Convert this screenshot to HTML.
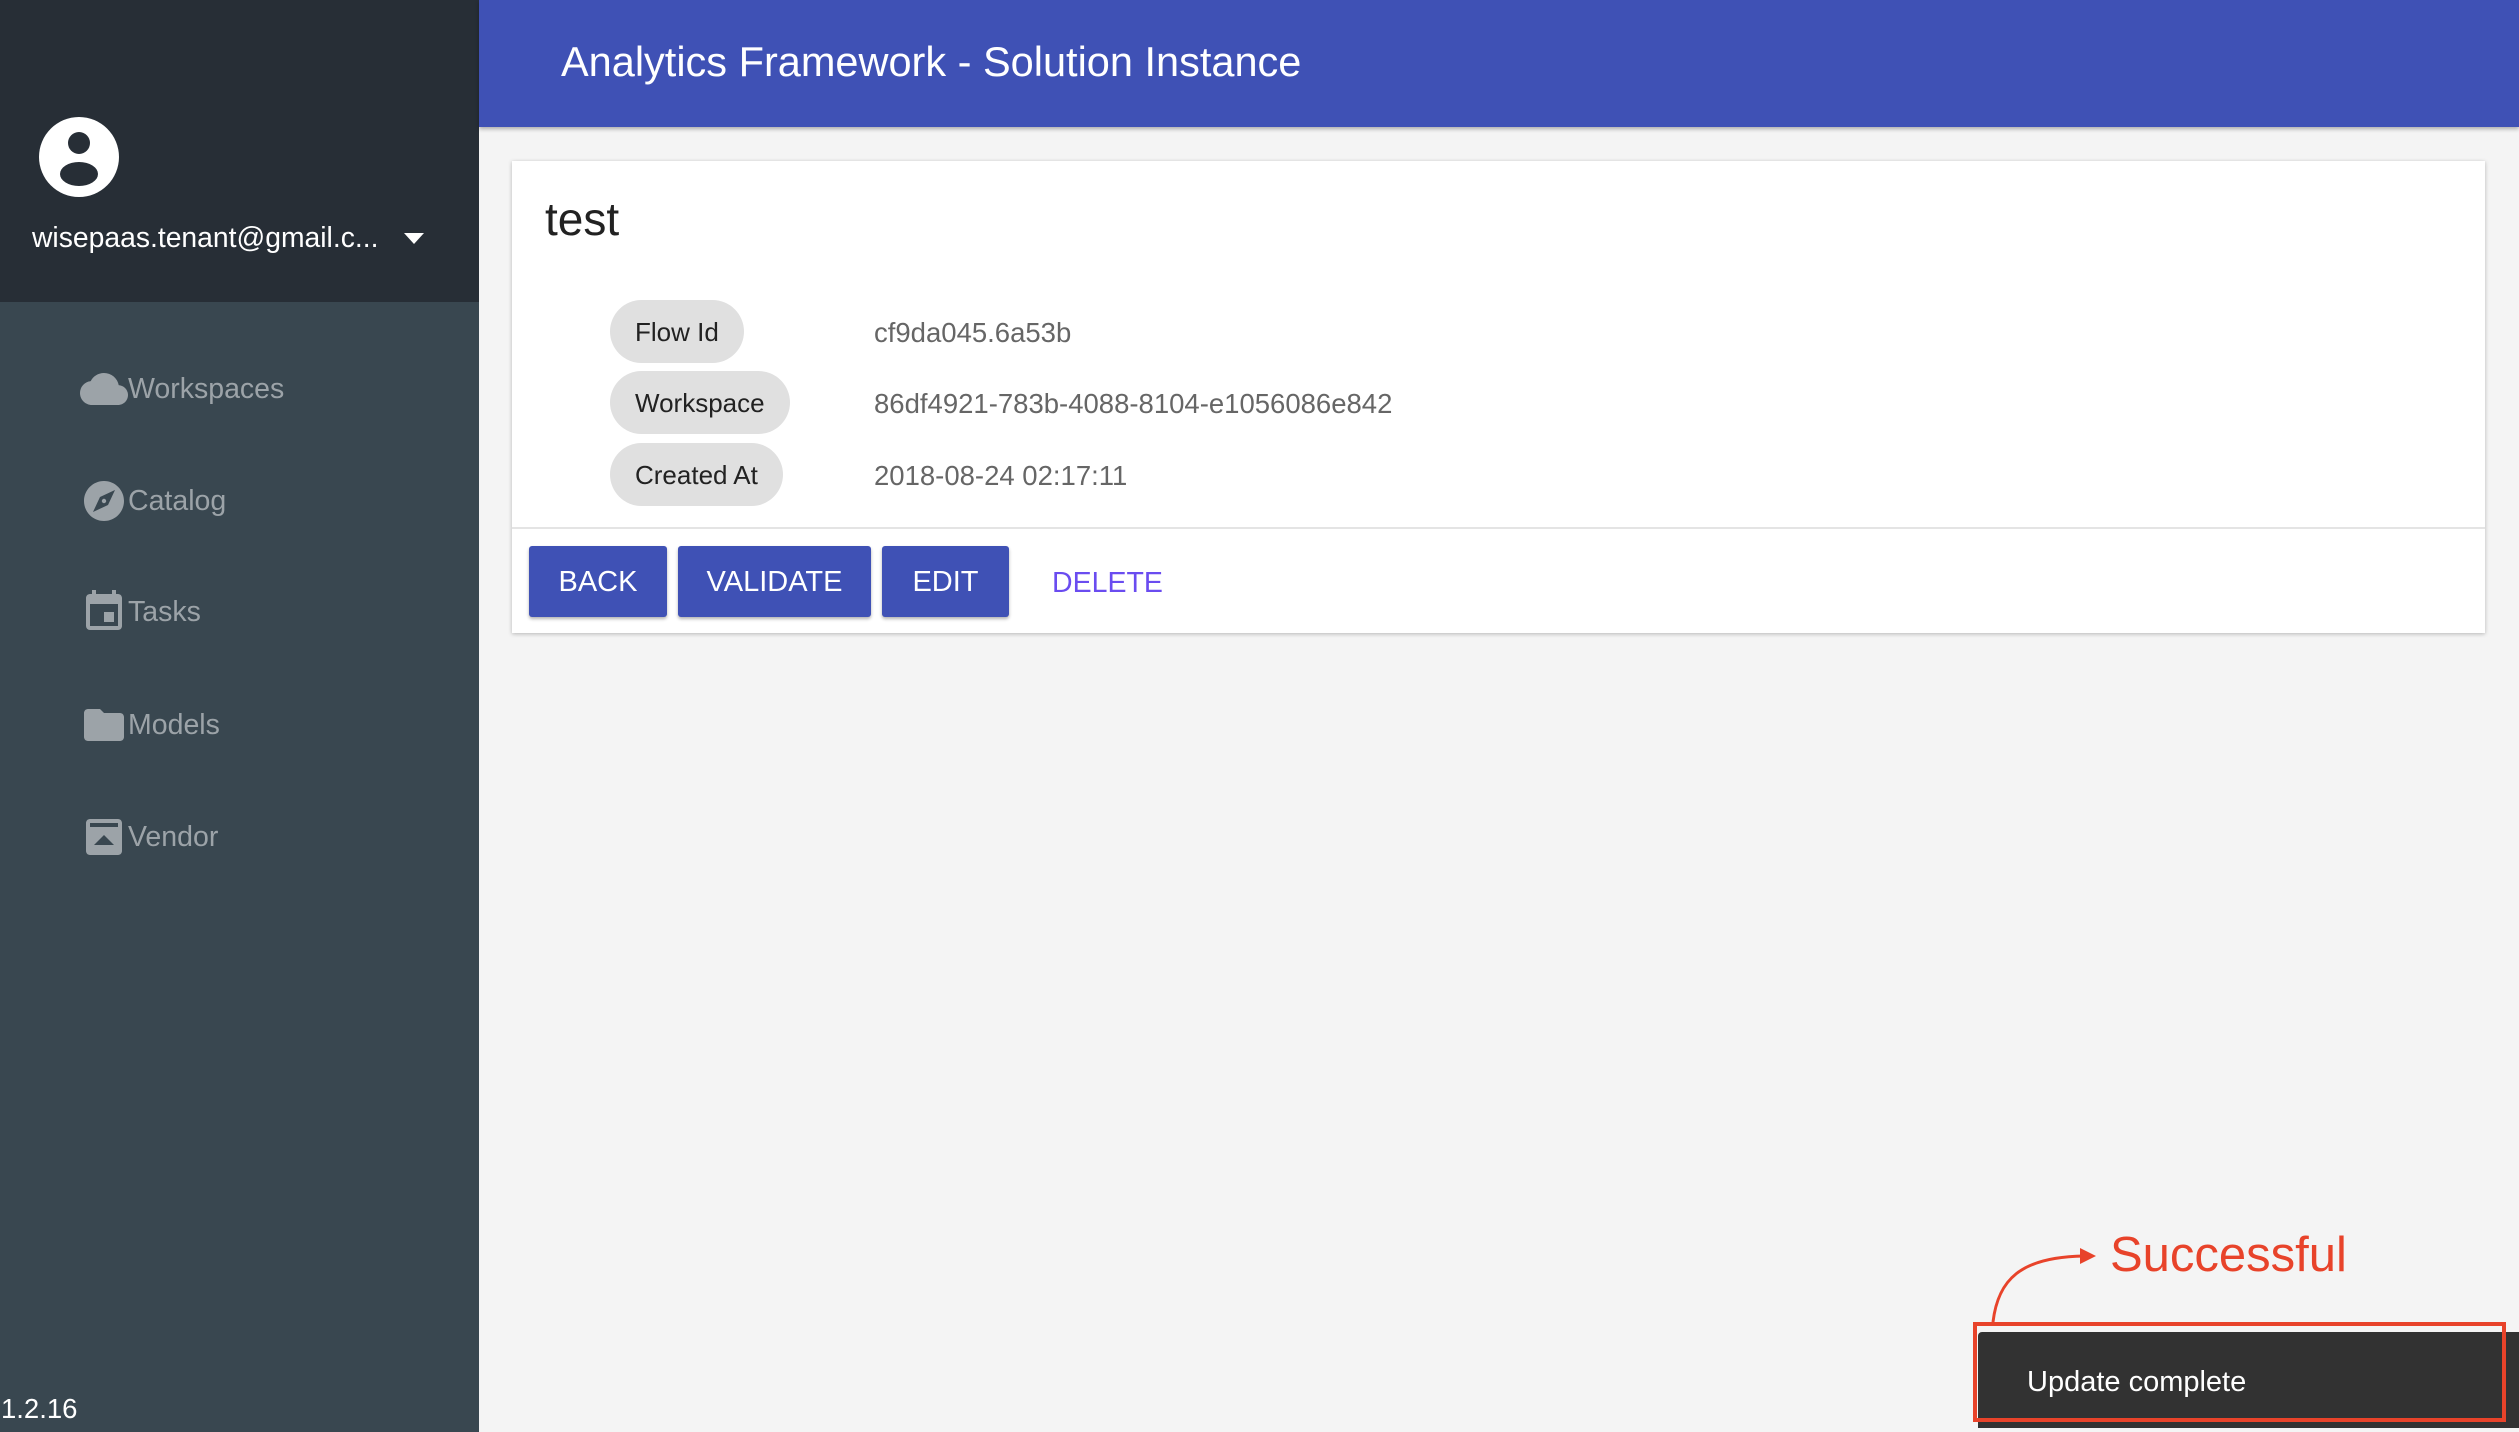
<!DOCTYPE html>
<html><head><meta charset="utf-8"><style>
*{margin:0;padding:0;box-sizing:border-box}
body{width:2519px;height:1432px;overflow:hidden;background:#f4f4f4;font-family:"Liberation Sans",Arial,sans-serif;position:relative}
.side{position:absolute;left:0;top:0;width:479px;height:1432px;background:#394750}
.top{position:absolute;left:0;top:0;width:479px;height:302px;background:#272e36}
.email{position:absolute;left:32px;top:221px;color:#fff;font-size:28.3px}
.nav{position:absolute;left:80px;height:50px;display:flex;align-items:center;color:#9ca3a8;font-size:28.5px}
.nav svg{width:48px;height:48px;fill:#9ca3a8;margin-right:0}
.ver{position:absolute;left:1px;top:1393px;color:#fff;font-size:27.5px}
.hdr{position:absolute;left:479px;top:0;right:0;height:127px;background:#3f51b5;box-shadow:0 2px 4px rgba(0,0,0,.3)}
.hdr span{position:absolute;left:82px;top:38px;color:#fff;font-size:41.5px}
.card{position:absolute;left:512px;top:161px;width:1973px;height:472px;background:#fff;box-shadow:0 1px 4px rgba(0,0,0,.25)}
.title{position:absolute;left:33px;top:31px;font-size:46px;color:#222}
.chip{position:absolute;left:98px;height:63px;background:#e0e0e0;border-radius:32px;font-size:26px;color:#222;line-height:65px;padding:0 25px}
.val{position:absolute;left:362px;font-size:27.5px;color:#666;line-height:65px}
.div{position:absolute;left:0;right:0;top:366px;height:2px;background:#e4e4e4}
.btn{position:absolute;top:385px;height:71px;background:#3f51b5;color:#fff;font-size:29px;line-height:73px;text-align:center;border-radius:3px;box-shadow:0 2px 3px rgba(0,0,0,.3)}
.snack{position:absolute;left:1978px;top:1332px;width:541px;height:96px;background:#323232;border-radius:4px 0 0 0;color:#fff;font-size:29px;line-height:100px;padding-left:49px}
.red{position:absolute;left:1973px;top:1322px;width:533px;height:100px;border:4px solid #e8432a}
.succ{position:absolute;left:2110px;top:1227px;color:#e8432a;font-size:49px}
</style></head><body>
<div class="side"></div>
<div class="top"></div>
<svg style="position:absolute;left:38px;top:116px" width="82" height="82" viewBox="0 0 82 82"><circle cx="41" cy="41" r="40" fill="#fff"/><circle cx="41" cy="27" r="11" fill="#272e36"/><ellipse cx="41" cy="58" rx="19" ry="12" fill="#272e36"/></svg>
<div class="email">wisepaas.tenant@gmail.c...</div>
<svg style="position:absolute;left:404px;top:233px" width="20" height="12"><path d="M0 0h20L10 11z" fill="#fff"/></svg>
<div class="nav" style="top:364px"><svg viewBox="0 0 24 24"><path d="M19.35 10.04A7.49 7.49 0 0 0 12 4C9.11 4 6.6 5.64 5.35 8.04A5.994 5.994 0 0 0 0 14c0 3.31 2.69 6 6 6h13c2.76 0 5-2.24 5-5 0-2.64-2.05-4.78-4.65-4.96z"/></svg>Workspaces</div>
<div class="nav" style="top:476px"><svg viewBox="0 0 24 24"><path d="M12 2C6.48 2 2 6.48 2 12s4.48 10 10 10 10-4.48 10-10S17.52 2 12 2zm-5.5 15.5 3.5-7.5 7.5-3.5-3.5 7.5-7.5 3.5zm5.5-6.6a1.1 1.1 0 1 0 0 2.2 1.1 1.1 0 0 0 0-2.2z"/></svg>Catalog</div>
<div class="nav" style="top:587px"><svg viewBox="0 0 24 24"><path d="M17 12h-5v5h5v-5zM16 1v2H8V1H6v2H5c-1.11 0-2 .9-2 2v14a2 2 0 0 0 2 2h14c1.1 0 2-.9 2-2V5c0-1.1-.9-2-2-2h-1V1h-2zm3 18H5V8h14v11z"/></svg>Tasks</div>
<div class="nav" style="top:700px"><svg viewBox="0 0 24 24"><path d="M10 4H4c-1.1 0-2 .9-2 2v12c0 1.1.9 2 2 2h16c1.1 0 2-.9 2-2V8c0-1.1-.9-2-2-2h-8l-2-2z"/></svg>Models</div>
<div class="nav" style="top:812px"><svg viewBox="0 0 24 24"><path d="M19 3H5c-1.1 0-2 .9-2 2v14c0 1.1.9 2 2 2h14c1.1 0 2-.9 2-2V5c0-1.1-.9-2-2-2zm0 2v2H5V5h14zM7 16l5-5 5 5H7z"/></svg>Vendor</div>
<div class="ver">1.2.16</div>
<div class="hdr"><span>Analytics Framework - Solution Instance</span></div>
<div class="card">
<div class="title">test</div>
<div class="chip" style="top:139px">Flow Id</div><div class="val" style="top:139px">cf9da045.6a53b</div>
<div class="chip" style="top:210px">Workspace</div><div class="val" style="top:210px">86df4921-783b-4088-8104-e1056086e842</div>
<div class="chip" style="top:282px">Created At</div><div class="val" style="top:282px">2018-08-24 02:17:11</div>
<div class="div"></div>
<div class="btn" style="left:17px;width:138px">BACK</div>
<div class="btn" style="left:166px;width:193px">VALIDATE</div>
<div class="btn" style="left:370px;width:127px">EDIT</div>
<div style="position:absolute;left:540px;top:386px;line-height:73px;font-size:28.5px;color:#6a4cf0">DELETE</div>
</div>
<div class="snack">Update complete</div>
<div class="red"></div>
<svg style="position:absolute;left:1980px;top:1240px" width="140" height="90"><path d="M13 82C18 40 40 17 104 16" fill="none" stroke="#e8432a" stroke-width="3"/><path d="M100 8l16 8-16 8z" fill="#e8432a"/></svg>
<div class="succ">Successful</div>
</body></html>
